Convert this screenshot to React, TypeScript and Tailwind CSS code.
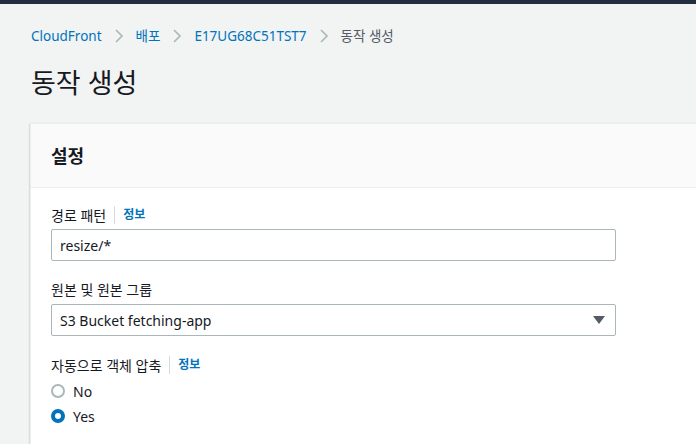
import React from "react";

const font = { fontFamily: '"Noto Sans", "Noto Sans CJK KR", sans-serif' };

const Chevron = () => (
  <svg width="10" height="16" viewBox="0 0 10 16" className="mx-[12px]">
    <path d="M2 2 L8 8 L2 14" fill="none" stroke="#aab7b8" strokeWidth="1.6" />
  </svg>
);

const Label = ({ text, info }: { text: string; info?: boolean }) => (
  <div className="flex items-center h-[20px] text-[14px] text-[#16191f]">
    <span>{text}</span>
    {info && (
      <>
        <span className="mx-[8px] h-[18px] w-px bg-[#d5dbdb]" />
        <span className="text-[12px] font-bold text-[#0073bb]">정보</span>
      </>
    )}
  </div>
);

const App = () => {
  return (
    <div style={font} className="w-[696px] h-[444px] overflow-hidden bg-[#f2f3f3]">
      <div className="h-[4px] bg-[#232f3e]" />
      <div className="flex items-center pl-[31px] pt-[22px] h-[42px] text-[13.5px]">
        <span className="text-[#0073bb]">CloudFront</span>
        <Chevron />
        <span className="text-[#0073bb]">배포</span>
        <Chevron />
        <span className="text-[#0073bb]">E17UG68C51TST7</span>
        <Chevron />
        <span className="text-[#545b64]">동작 생성</span>
      </div>
      <h1 className="pl-[31px] mt-[19px] text-[27px] leading-[36px] text-[#16191f]">동작 생성</h1>
      <div className="ml-[30px] mt-[22px] bg-white border-l border-t border-[#eaeded] shadow-[0_1px_2px_rgba(0,28,36,0.3)]">
        <div className="h-[64px] flex items-center pl-[20px] pt-[2px] bg-[#fafafa] border-b border-[#eaeded]">
          <span className="text-[18px] font-bold text-[#16191f]">설정</span>
        </div>
        <div className="pl-[20px] pt-[17px] pb-[40px] flex flex-col">
          <Label text="경로 패턴" info />
          <div className="mt-[4px] w-[565px] h-[32px] border border-[#aab7b8] rounded-[2px] flex items-center px-[8px] text-[14px] text-[#16191f]">
            resize/*
          </div>
          <div className="mt-[18px]">
            <Label text="원본 및 원본 그룹" />
          </div>
          <div className="mt-[5px] w-[565px] h-[32px] border border-[#aab7b8] rounded-[2px] flex items-center justify-between pl-[8px] pr-[10px] text-[14px] text-[#16191f]">
            <span>S3 Bucket fetching-app</span>
            <svg width="12" height="8" viewBox="0 0 12 8">
              <path d="M0 0 H12 L6 8 Z" fill="#545b64" />
            </svg>
          </div>
          <div className="mt-[19px]">
            <Label text="자동으로 객체 압축" info />
          </div>
          <div className="mt-[6px] flex items-center h-[20px] text-[14px] text-[#16191f]">
            <span className="w-[14px] h-[14px] rounded-full border-2 border-[#aab7b8] bg-white" />
            <span className="ml-[8px]">No</span>
          </div>
          <div className="mt-[5px] flex items-center h-[20px] text-[14px] text-[#16191f]">
            <span className="w-[14px] h-[14px] rounded-full border-[4px] border-[#0073bb] bg-white" />
            <span className="ml-[8px]">Yes</span>
          </div>
        </div>
      </div>
    </div>
  );
};

export default App;
